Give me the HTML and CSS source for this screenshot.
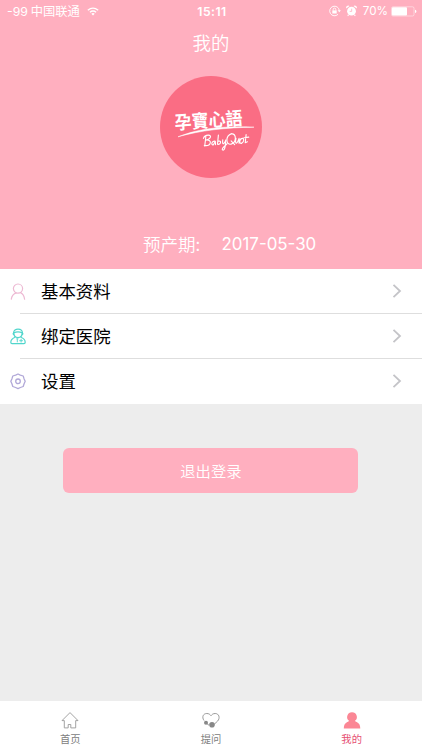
FILE: index.html
```html
<!DOCTYPE html>
<html lang="zh-CN">
<head>
<meta charset="utf-8">
<title>我的</title>
<link rel="stylesheet" href="styles.css">
</head>
<body>
<div class="app">
  <header class="profile">
    <div class="status">
      <div class="carrier">
        <span><span class="signal">-99</span> 中国联通</span>
        <svg class="wifi" width="12" height="9" viewBox="0 0 12 9" fill="none" stroke="#fff" stroke-width="1.4"><path d="M.8 3.2Q6-1 11.2 3.2M2.9 5.2Q6 2.7 9.1 5.2"/><path d="M4.3 6.7Q6 5.4 7.7 6.7L6 8.5Z" fill="#fff" stroke="none"/></svg>
      </div>
      <time class="clock">15:11</time>
      <div class="indicators">
        <svg width="12" height="12" viewBox="0 0 12 12" fill="none" stroke="#fff" stroke-width=".9"><path d="M9 9.3A4.8 4.8 0 1 1 10.3 5.5"/><path d="M8.6 5.3h3.3L10.3 7.3Z" fill="#fff" stroke="none"/><path d="M3.3 5.4h4.4v3.1H3.3Z" fill="#fff" stroke="none"/><path d="M4.2 5.5V4.4a1.3 1.3 0 0 1 2.6 0v1.1"/></svg>
        <svg class="alarm" width="11" height="12" viewBox="0 0 11 12"><g fill="#fff"><circle cx="5.5" cy="6.2" r="4.4"/><path d="M.3 3.5A2.1 2.1 0 0 1 3.5 1Z M10.7 3.5A2.1 2.1 0 0 0 7.5 1Z"/><path d="M2 9.2l1 1-1 1-.6-.5ZM9 9.2l-1 1 1 1 .6-.5Z"/></g><path d="M5.7 3.7v2.7H3.7" fill="none" stroke="#ffafbf" stroke-width=".8"/></svg>
        <span class="percent">70%</span>
        <svg width="26" height="11" viewBox="0 0 26 11"><rect x=".5" y=".8" width="22.5" height="9.2" rx="1.5" fill="none" stroke="#fff" stroke-opacity=".65" stroke-width=".7"/><rect x="1" y="1.2" width="15" height="8.4" rx="1" fill="#fff"/><path d="M24 3.7q1.4.4 1.4 1.7T24 7.1Z" fill="#fff"/></svg>
      </div>
    </div>
    <h1 class="title">我的</h1>
    <svg class="avatar" width="102" height="102" viewBox="0 0 102 102">
      <circle cx="51" cy="51" r="51" fill="#fa6d84"/>
      <text class="brand" transform="translate(15 53.4) rotate(-4) scale(.93 1)">孕寶心語</text>
      <path d="M18 60.8C38 53 60 49.7 94 51.2C66 51.5 40 54.5 18 60.8Z" fill="#fff" stroke="#fff" stroke-width=".5"/>
      <g transform="translate(2.5 4) scale(.88 .95)" fill="none" stroke="#fff" stroke-width="1.25" stroke-linecap="round" stroke-linejoin="round">
        <path d="M49.3 59.2L48 69.5M46.5 61.5C48 57 57 57 54 61C53 62.5 51 63 49.5 63.2C57 62.5 55.5 70 47.5 69M60 64.5C56 63 54.5 69.5 58 68L60 64.5L60.3 68M63.5 58L62.5 67.5C66 69 68 63 63 64.5M68.5 63C67.5 69 70 68 72 63C71.5 69 71 75 68 73.5C67 71.5 71 69.5 73.5 67"/>
        <path d="M78.5 56.5C71 59 72 69 78 67.5C84 66 84.5 57 78.5 56.5M78 64L82 68M83.5 61.5C82 68 84.5 68 87 61.5L87 66.5M90.8 61.5C87 62 87 67.5 89.8 66.7C93.5 65 92.5 61 90.8 61.5M95 57.5L94 66L96.5 65M92.5 60.8L98 60.2"/>
      </g>
    </svg>
    <p class="due"><span class="due-label">预产期:</span><span class="due-date">2017-05-30</span></p>
  </header>
  <ul class="menu">
    <li class="item">
      <svg class="icon" width="16" height="18" viewBox="0 0 16 18" fill="none" stroke="#edb9d3" stroke-width="1.2" stroke-linecap="round"><circle cx="8" cy="5.6" r="4.6"/><path d="M6.3 9.9C3.5 10.8 1.8 12.9 1.3 16.2M10.6 9.6C13 10.8 14.2 13 14.6 16.2"/></svg>
      <div class="row"><span class="label">基本资料</span><svg class="chevron" width="10" height="16" viewBox="0 0 10 16"><path d="M1.5 1.8L8 8l-6.5 6.2"/></svg></div>
    </li>
    <li class="item">
      <svg class="icon" width="16" height="18" viewBox="0 0 16 18" fill="none" stroke="#51d6cc" stroke-width="1.2"><path d="M3.6 5C3.6-.2 12.4-.2 12.4 5C9.5 3.6 6.5 3.6 3.6 5ZM3.6 5Q2.5 5.8 4 6.8M12.4 5Q13.5 5.8 12 6.8M4 5.6C4 11 12 11 12 5.6"/><path d="M5.3 9.2C2.6 10.2.8 12.2.8 14.3Q.8 15.6 2 15.6H14Q15.2 15.6 15.2 14.3C15.2 12.2 13.5 10.2 10.7 9.2"/><path d="M9.3 12.7h3.6M11.1 10.9v3.6M6.3 10.8h2M7.3 10.8v3.5" stroke-width=".9"/></svg>
      <div class="row"><span class="label">绑定医院</span><svg class="chevron" width="10" height="16" viewBox="0 0 10 16"><path d="M1.5 1.8L8 8l-6.5 6.2"/></svg></div>
    </li>
    <li class="item">
      <svg class="icon" width="16" height="18" viewBox="0 0 16 18" fill="none" stroke="#b1a8d8" stroke-width="1.3" stroke-linejoin="round"><path d="M8 1L10.3 2.1L13.2 3L14.1 5.9L15.2 8.3L14.1 10.8L13.2 13.5L10.4 14.5L8 15.6L5.6 14.5L2.8 13.5L1.9 10.8L.8 8.3L1.9 5.9L2.8 3L5.6 2.1Z"/><circle cx="8" cy="8.3" r="2.3"/></svg>
      <div class="row"><span class="label">设置</span><svg class="chevron" width="10" height="16" viewBox="0 0 10 16"><path d="M1.5 1.8L8 8l-6.5 6.2"/></svg></div>
    </li>
  </ul>
  <main class="content"><button class="logout" type="button">退出登录</button></main>
  <nav class="tabs">
    <a class="tab"><svg width="18" height="19" viewBox="0 0 18 19" fill="none" stroke="#999" stroke-width=".9"><path d="M1 9.6L9 1.6l8 8h-2.3v7.3H9.8v-3.4H7.2v3.4H3.3V9.6Z"/></svg><span>首页</span></a>
    <a class="tab"><svg width="18" height="19" viewBox="0 0 18 19" fill="none" stroke="#999" stroke-width="1"><path d="M2 9.5C-.5 6 1.3 2.5 4.8 2.5C7 2.5 8 3.5 9 4.7C10 3.5 11 2.5 13.2 2.5C17 2.5 18.5 7 15.5 10.2L12.3 13.2M4.8 12.5L7 14.3"/><circle cx="4" cy="11.7" r="2" fill="#888" stroke="none"/><circle cx="10" cy="13.8" r="2.8" fill="#888" stroke="none"/></svg><span>提问</span></a>
    <a class="tab active"><svg width="18" height="19" viewBox="0 0 18 19" fill="#fb8795"><path d="M9 1.2a4.8 4.8 0 0 1 3 8.6c.3 1.7 5.3.8 5.3 7.6H.8C.8 10.6 5.7 11.5 6 9.8A4.8 4.8 0 0 1 9 1.2Z"/></svg><span>我的</span></a>
  </nav>
</div>
</body>
</html>
```
FILE: styles.css
```css
* { box-sizing: border-box; }
body {
  margin: 0;
  background: #ededed;
  font-family: "Noto Sans CJK SC", sans-serif;
}
svg { display: block; flex: none; }
.app { display: flex; flex-direction: column; width: 422px; height: 750px; }
.profile {
  display: flex;
  flex-direction: column;
  align-items: center;
  height: 269px;
  background: #ffafbf;
  color: #fff;
}
.status {
  display: grid;
  grid-template-columns: 1fr auto 1fr;
  align-items: center;
  width: 100%;
  height: 21px;
  padding: 0 5px 0 7px;
  font-size: 12px;
  line-height: 21px;
}
.carrier { display: flex; align-items: center; gap: 7px; font-size: 12.3px; }
.signal, .clock, .percent, .due-date { font-family: Inter, "Liberation Sans", sans-serif; }
.clock { font-size: 12.2px; font-weight: 600; letter-spacing: .5px; }
.indicators { display: flex; align-items: center; justify-content: flex-end; }
.alarm { margin: 0 6px 0 5px; }
.percent { margin-right: 3px; padding-top: 1px; font-size: 11.7px; }
.title { margin: 6px 0 0; font-size: 18.4px; font-weight: 350; line-height: 30px; }
.avatar { margin-top: 18.5px; }
.brand { fill: #fff; font-family: "Noto Sans CJK TC", sans-serif; font-size: 18.3px; font-weight: 700; }
.due {
  display: flex;
  align-items: center;
  gap: 20.5px;
  width: 100%;
  margin: 51.5px 0 0;
  padding-left: 143px;
  font-size: 17.5px;
  font-weight: 350;
  line-height: 30px;
}
.due-label { width: 58px; margin-top: -1px; }
.due-date { font-size: 16.9px; font-weight: 400; }
.menu { height: 135px; margin: 0; padding: 0; list-style: none; background: #fff; }
.item { display: flex; align-items: center; height: 45px; padding-left: 10px; }
.icon { margin-right: -6px; }
.row {
  display: flex;
  flex: 1;
  align-items: center;
  justify-content: space-between;
  height: 45px;
  padding: 0 20px 0 21px;
  border-bottom: 1px solid #dedede;
  color: #000;
  font-size: 17.4px;
}
.label { padding-bottom: 1px; }
.item:last-child .row { padding-bottom: 1px; border-bottom: 0; }
.chevron { fill: none; stroke: #c4c4c8; stroke-width: 1.8; }
.content { flex: 1; padding: 44px 64px 0 63.4px; }
.logout {
  display: block;
  width: 295px;
  height: 45px;
  padding: 0 0 2px;
  border: 0;
  border-radius: 6px;
  background: #ffafbf;
  color: #fff;
  font-family: inherit;
  font-size: 15.3px;
  font-weight: 350;
}
.tabs { display: grid; grid-template-columns: repeat(3, 1fr); height: 49px; background: #fff; }
.tab {
  display: flex;
  flex-direction: column;
  align-items: center;
  padding-top: 10px;
  color: #808080;
  font-size: 10.3px;
  line-height: 18px;
}
.active { color: #e64e72; }
```
